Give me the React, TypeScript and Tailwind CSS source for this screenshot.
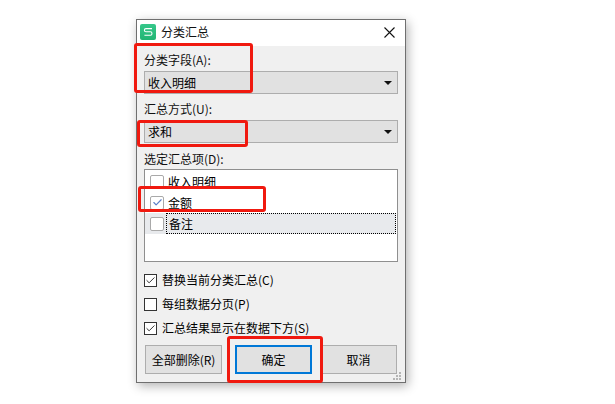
import { Check } from "lucide-react";

const font = { fontFamily: '"Noto Sans CJK SC", "Liberation Sans", sans-serif' };

function Combo({ value }: { value: string }) {
  return (
    <div className="h-[23px] flex items-center justify-between pl-[3px] pr-[5px] bg-[#e1e1e1] border border-[#adadad] text-[12px] text-black">
      <span>{value}</span>
      <svg width="8" height="4" viewBox="0 0 8 4">
        <path d="M0 0h8L4 4z" fill="#111" />
      </svg>
    </div>
  );
}

function ListRow({ label, checked, active }: { label: string; checked?: boolean; active?: boolean }) {
  return (
    <div className={`h-[21px] flex items-center pl-[5px] ${active ? "bg-[#e8eaed]" : ""}`}>
      <div className="w-[14px] h-[14px] rounded-[2px] border border-[#a9a9a9] bg-white flex items-center justify-center shrink-0">
        {checked && <Check size={11} strokeWidth={2.5} className="text-[#5b7fc7]" />}
      </div>
      <span className={`ml-[2px] pl-[2px] h-[21px] flex-1 flex items-center text-[12px] text-black ${active ? "border border-dotted border-black pl-[1px]" : ""}`}>
        {label}
      </span>
    </div>
  );
}

function CheckRow({ label, checked }: { label: string; checked?: boolean }) {
  return (
    <div className="h-[24px] flex items-center">
      <div className="w-[13px] h-[13px] border border-[#333] bg-white flex items-center justify-center shrink-0">
        {checked && <Check size={11} strokeWidth={2} className="text-[#222]" />}
      </div>
      <span className="ml-[5px] text-[12px] text-black">{label}</span>
    </div>
  );
}

function Btn({ label, primary }: { label: string; primary?: boolean }) {
  return (
    <div
      className={`w-[77px] h-[29px] flex items-center justify-center text-[12px] text-black bg-[#e1e1e1] ${
        primary ? "border-2 border-[#0078d7]" : "border border-[#adadad]"
      }`}
    >
      {label}
    </div>
  );
}

export default function App() {
  return (
    <div className="relative w-[615px] h-[404px] bg-white overflow-hidden pt-[19px] pl-[136px]" style={font}>
      {/* dialog */}
      <div className="w-[270px] h-[364px] border border-[#6f6f6f] bg-[#f0f0f0] shadow-[2px_3px_10px_rgba(0,0,0,0.3)] flex flex-col relative">
        <div className="h-[26px] bg-white flex items-start pt-[4px] pl-[3px] shrink-0">
          {/* app logo */}
          <svg width="16" height="16" viewBox="0 0 16 16">
            <defs>
              <linearGradient id="logo" x1="0" y1="0" x2="0" y2="1">
                <stop offset="0" stopColor="#35c78a" />
                <stop offset="1" stopColor="#22b573" />
              </linearGradient>
            </defs>
            <rect width="16" height="16" rx="2" fill="url(#logo)" />
            <path
              d="M12 4.6H6C4.9 4.6 4.4 5.2 4.4 6.2S4.9 7.8 6 7.8H10.4C11.5 7.8 12 8.4 12 9.4S11.5 11.2 10.4 11.2H4.4"
              fill="none"
              stroke="#fff"
              strokeWidth="1.1"
            />
          </svg>
          <span className="ml-[5px] text-[12px] leading-[16px] text-[#111]">分类汇总</span>
          <svg width="11" height="11" viewBox="0 0 11 11" className="ml-auto mr-[10px] mt-[3px]">
            <path d="M0.5 0.5L10.5 10.5M10.5 0.5L0.5 10.5" stroke="#111" strokeWidth="1.1" />
          </svg>
        </div>

        <div className="flex-1 px-[7px] pt-[5px] flex flex-col">
          <div className="h-[18px] flex items-center text-[12px] text-[#111]">分类字段(A):</div>
          <div className="mt-[2px]">
            <Combo value="收入明细" />
          </div>
          <div className="h-[18px] mt-[6px] flex items-center text-[12px] text-[#111]">汇总方式(U):</div>
          <div className="mt-[2px]">
            <Combo value="求和" />
          </div>
          <div className="h-[18px] mt-[7px] flex items-center text-[12px] text-[#111]">选定汇总项(D):</div>
          <div className="mt-[1px] h-[93px] border border-[#8f8f8f] bg-white pt-[1px] pr-[1px]">
            <ListRow label="收入明细" />
            <ListRow label="金额" checked />
            <ListRow label="备注" active />
          </div>

          <div className="mt-[6px]">
            <CheckRow label="替换当前分类汇总(C)" checked />
            <CheckRow label="每组数据分页(P)" />
            <CheckRow label="汇总结果显示在数据下方(S)" checked />
          </div>

          <div className="mt-[5px] flex pl-[1px] gap-[13px]">
            <Btn label="全部删除(R)" />
            <Btn label="确定" primary />
            <div className="-ml-[5px]">
              <Btn label="取消" />
            </div>
          </div>
        </div>

        {/* resize grip */}
        <svg width="9" height="9" viewBox="0 0 9 9" className="absolute right-[3px] bottom-[1px]">
          <path d="M6 0h2v2H6zM3 3h2v2H3zM6 3h2v2H6zM0 6h2v2H0zM3 6h2v2H3zM6 6h2v2H6z" fill="#b5b5b5" />
        </svg>
      </div>

      {/* red annotation boxes */}
      <div className="absolute left-[134px] top-[43px] w-[119px] h-[50px] border-[3px] border-[#f0190f] rounded-[3px]" />
      <div className="absolute left-[137px] top-[120px] w-[111px] h-[27px] border-[3px] border-[#f0190f] rounded-[3px]" />
      <div className="absolute left-[138px] top-[186px] w-[128px] h-[26px] border-[3px] border-[#f0190f] rounded-[3px]" />
      <div className="absolute left-[227px] top-[336px] w-[96px] h-[47px] border-[3px] border-[#f0190f] rounded-[3px]" />
    </div>
  );
}
